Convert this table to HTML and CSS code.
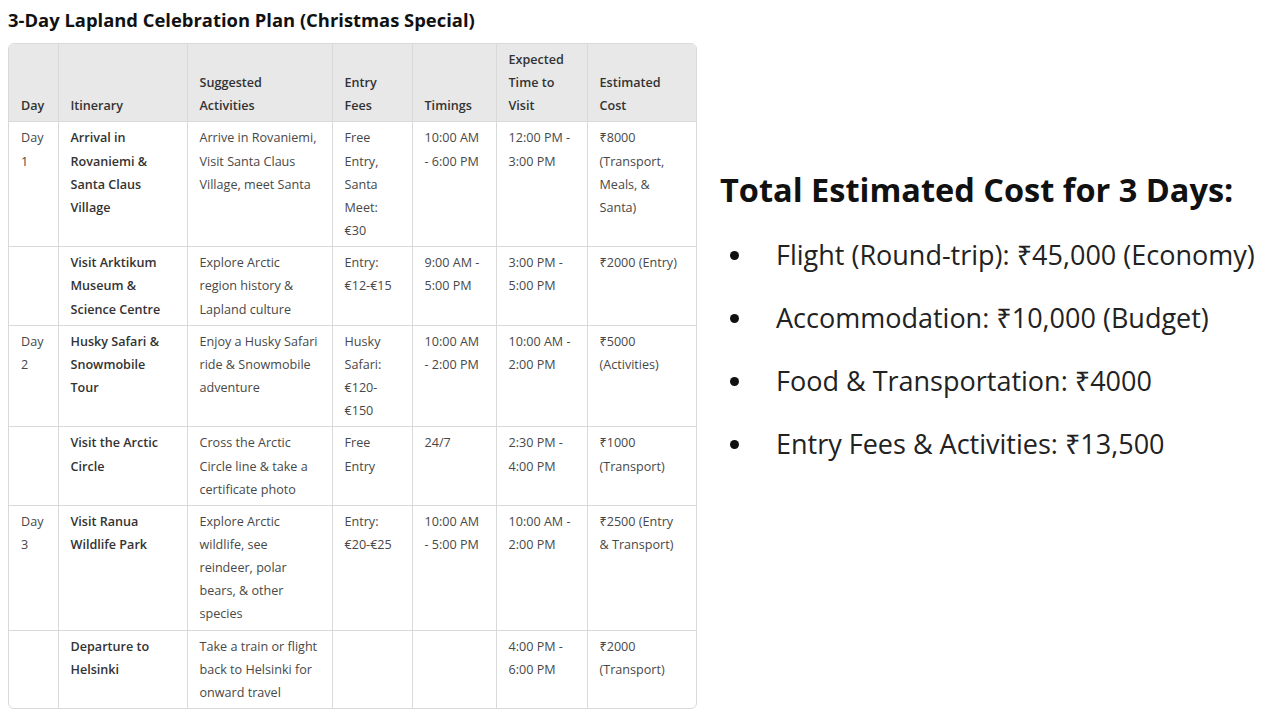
FILE: index.html
```html
<!DOCTYPE html>
<html lang="en">
<head>
<meta charset="utf-8">
<title>3-Day Lapland Celebration Plan</title>
<link rel="stylesheet" href="styles.css">
</head>
<body>
<div class="page">
  <section class="plan">
    <h1 class="plan-title">3-Day Lapland Celebration Plan (Christmas Special)</h1>
    <div class="table-wrap">
      <table class="plan-table">
        <colgroup>
          <col class="c-day"><col class="c-itin"><col class="c-act"><col class="c-fee"><col class="c-time"><col class="c-exp"><col class="c-cost">
        </colgroup>
        <thead>
          <tr>
            <th>Day</th>
            <th>Itinerary</th>
            <th>Suggested Activities</th>
            <th>Entry Fees</th>
            <th>Timings</th>
            <th>Expected Time to Visit</th>
            <th>Estimated Cost</th>
          </tr>
        </thead>
        <tbody>
          <tr>
            <td>Day 1</td>
            <td class="itin">Arrival in Rovaniemi &amp; Santa Claus Village</td>
            <td>Arrive in Rovaniemi, Visit Santa Claus Village, meet Santa</td>
            <td>Free Entry, Santa Meet: €30</td>
            <td>10:00 AM - 6:00 PM</td>
            <td>12:00 PM - 3:00 PM</td>
            <td>₹8000 (Transport, Meals, &amp; Santa)</td>
          </tr>
          <tr>
            <td></td>
            <td class="itin">Visit Arktikum Museum &amp; Science Centre</td>
            <td>Explore Arctic region history &amp; Lapland culture</td>
            <td>Entry: €12-€15</td>
            <td>9:00 AM - 5:00 PM</td>
            <td>3:00 PM - 5:00 PM</td>
            <td>₹2000 (Entry)</td>
          </tr>
          <tr>
            <td>Day 2</td>
            <td class="itin">Husky Safari &amp; Snowmobile Tour</td>
            <td>Enjoy a Husky Safari ride &amp; Snowmobile adventure</td>
            <td>Husky Safari: €120-€150</td>
            <td>10:00 AM - 2:00 PM</td>
            <td>10:00 AM - 2:00 PM</td>
            <td>₹5000 (Activities)</td>
          </tr>
          <tr>
            <td></td>
            <td class="itin">Visit the Arctic Circle</td>
            <td>Cross the Arctic Circle line &amp; take a certificate photo</td>
            <td>Free Entry</td>
            <td>24/7</td>
            <td>2:30 PM - 4:00 PM</td>
            <td>₹1000 (Transport)</td>
          </tr>
          <tr>
            <td>Day 3</td>
            <td class="itin">Visit Ranua Wildlife Park</td>
            <td>Explore Arctic wildlife, see reindeer, polar bears, &amp; other species</td>
            <td>Entry: €20-€25</td>
            <td>10:00 AM - 5:00 PM</td>
            <td>10:00 AM - 2:00 PM</td>
            <td>₹2500 (Entry &amp; Transport)</td>
          </tr>
          <tr>
            <td></td>
            <td class="itin">Departure to Helsinki</td>
            <td>Take a train or flight back to Helsinki for onward travel</td>
            <td></td>
            <td></td>
            <td>4:00 PM - 6:00 PM</td>
            <td>₹2000 (Transport)</td>
          </tr>
        </tbody>
      </table>
    </div>
  </section>
  <section class="totals">
    <h2 class="totals-title">Total Estimated Cost for 3 Days:</h2>
    <ul class="totals-list">
      <li>Flight (Round-trip): ₹45,000 (Economy)</li>
      <li>Accommodation: ₹10,000 (Budget)</li>
      <li>Food &amp; Transportation: ₹4000</li>
      <li>Entry Fees &amp; Activities: ₹13,500</li>
    </ul>
  </section>
</div>
</body>
</html>
```

FILE: styles.css
```css
html, body {
  margin: 0;
  padding: 0;
  background: #ffffff;
}

body {
  font-family: "Open Sans", "Noto Sans", "Liberation Sans", sans-serif;
  color: #222;
}

.page {
  display: flex;
  align-items: flex-start;
  padding: 8px;
  gap: 23px;
}

.plan {
  display: flex;
  flex-direction: column;
  width: 689px;
}

.plan-title {
  margin: 0;
  font-size: 18.4px;
  font-weight: 700;
  line-height: 24px;
  color: #111;
  height: 35px;
}

.table-wrap {
  border: 1px solid #d9d9d9;
  border-radius: 6px;
  overflow: hidden;
}

.plan-table {
  width: 100%;
  border-collapse: collapse;
  table-layout: fixed;
  font-size: 12.6px;
  line-height: 23.15px;
}

.c-day { width: 49px; }
.c-itin { width: 129px; }
.c-act { width: 145px; }
.c-fee { width: 80px; }
.c-time { width: 84px; }
.c-exp { width: 91px; }
.c-cost { width: 109px; }

.plan-table th,
.plan-table td {
  padding: 4px 12px 4px 12px;
  text-align: left;
  border-right: 1px solid #d9d9d9;
  border-bottom: 1px solid #d9d9d9;
  vertical-align: top;
}

.plan-table th:last-child,
.plan-table td:last-child {
  border-right: none;
}

.plan-table tbody tr:last-child td {
  border-bottom: none;
}

.plan-table th {
  background: #e8e8e8;
  font-weight: 600;
  color: #333;
  vertical-align: bottom;
}

.plan-table td {
  color: #484848;
  font-weight: 400;
}

.plan-table td.itin {
  font-weight: 600;
  color: #333;
}

.totals {
  padding-top: 162px;
  display: flex;
  flex-direction: column;
}

.totals-title {
  margin: 0;
  font-size: 32.5px;
  font-weight: 700;
  line-height: 40px;
  color: #111;
}

.totals-list {
  list-style: none;
  margin: 25px 0 0;
  padding: 0 0 0 10px;
  display: flex;
  flex-direction: column;
  gap: 23px;
}

.totals-list li {
  display: flex;
  align-items: center;
  font-size: 27px;
  line-height: 40px;
  color: #222;
}

.totals-list li::before {
  content: "";
  flex: none;
  width: 9px;
  height: 9px;
  border-radius: 50%;
  background: #111;
  margin-right: 37px;
}
```
